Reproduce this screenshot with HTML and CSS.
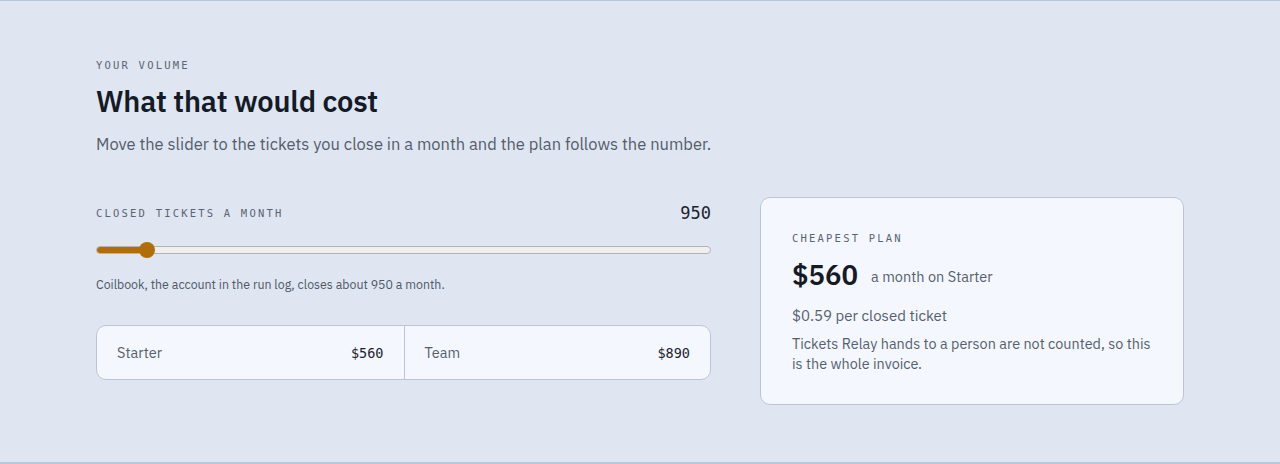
FILE: index.html
```html
<!DOCTYPE html>
<html lang="en">
<head>
<meta charset="utf-8">
<title>What that would cost</title>
<link rel="stylesheet" href="styles.css">
</head>
<body>
<section class="volume">
  <div class="intro">
    <p class="eyebrow">YOUR VOLUME</p>
    <h2 class="title">What that would cost</h2>
    <p class="lede">Move the slider to the tickets you close in a month and the plan follows the number.</p>
  </div>
  <div class="grid">
    <div class="calc">
      <div class="calc-head">
        <span class="eyebrow">CLOSED TICKETS A MONTH</span>
        <span class="count">950</span>
      </div>
      <div class="slider">
        <div class="track"><div class="fill" style="width: 51px"></div></div>
        <div class="thumb" style="left: 43px"></div>
      </div>
      <p class="note">Coilbook, the account in the run log, closes about 950 a month.</p>
      <div class="tiers">
        <div class="tier"><span class="tier-name">Starter</span><span class="tier-price">$560</span></div>
        <div class="tier"><span class="tier-name">Team</span><span class="tier-price">$890</span></div>
      </div>
    </div>
    <aside class="card">
      <p class="eyebrow">CHEAPEST PLAN</p>
      <div class="price-line"><span class="price">$560</span><span class="price-sub">a month on Starter</span></div>
      <p class="per">$0.59 per closed ticket</p>
      <p class="fine">Tickets Relay hands to a person are not counted, so this is the whole invoice.</p>
    </aside>
  </div>
</section>
</body>
</html>
```
FILE: styles.css
```css
* { box-sizing: border-box; }
html, body { margin: 0; padding: 0; }
body {
  background: #dfe6f1;
  font-family: "IBM Plex Sans", Inter, "Noto Sans", sans-serif;
  color: #4b5563;
}
.volume {
  height: 464px;
  border-top: 1px solid #b9c6d8;
  border-bottom: 2px solid #b9c6d8;
  padding: 56px 96px 0;
}
p { margin: 0; }
.eyebrow {
  font-family: "DejaVu Sans Mono", "Liberation Mono", monospace;
  font-size: 10.5px;
  letter-spacing: 2.2px;
  color: #5b6473;
  line-height: 16px;
}
.title {
  margin: 10px 0 0;
  font-size: 29px;
  font-weight: 600;
  color: #141b26;
  line-height: 36px;
  letter-spacing: -0.2px;
}
.lede {
  margin-top: 13px;
  font-size: 16.5px;
  line-height: 24px;
  color: #535d6c;
}
.grid {
  display: grid;
  grid-template-columns: 615px 424px;
  column-gap: 49px;
  margin-top: 41px;
}
.calc { padding-top: 6px; }
.calc-head {
  display: flex;
  justify-content: space-between;
  align-items: center;
}
.count {
  font-family: "DejaVu Sans Mono", "Liberation Mono", monospace;
  font-size: 17px;
  color: #1c2330;
}
.slider {
  position: relative;
  height: 16px;
  margin-top: 19px;
}
.track {
  position: absolute;
  left: 0; right: 0; top: 4px;
  height: 8px;
  border-radius: 4px;
  background: #efefef;
  border: 1px solid #b4b4b4;
  overflow: hidden;
}
.fill {
  height: 100%;
  background: #b06f04;
}
.thumb {
  position: absolute;
  top: 0;
  width: 16px; height: 16px;
  border-radius: 50%;
  background: #b06f04;
}
.note {
  margin-top: 18px;
  font-size: 12.35px;
  line-height: 16px;
  color: #4e5866;
}
.tiers {
  display: grid;
  grid-template-columns: 1fr 1fr;
  margin-top: 33px;
  height: 55px;
  background: #f4f7fd;
  border: 1px solid #bac6d8;
  border-radius: 10px;
}
.tier {
  display: flex;
  justify-content: space-between;
  align-items: center;
  padding: 0 20px;
}
.tier + .tier { border-left: 1px solid #bac6d8; }
.tier-name { font-size: 14.5px; color: #555f6e; }
.tier-price {
  font-family: "DejaVu Sans Mono", "Liberation Mono", monospace;
  font-size: 13.5px;
  color: #1c2330;
}
.card {
  height: 208px;
  background: #f4f7fd;
  border: 1px solid #bac6d8;
  border-radius: 10px;
  padding: 32px 31px;
}
.price-line {
  display: flex;
  align-items: center;
  gap: 13px;
  margin-top: 13px;
}
.price {
  font-size: 27.5px;
  font-weight: 600;
  color: #141b26;
  line-height: 32px;
}
.price-sub { font-size: 14.5px; line-height: 20px; color: #555f6e; padding-top: 3px; }
.per {
  margin-top: 15px;
  font-size: 15px;
  line-height: 20px;
  color: #555f6e;
}
.fine {
  margin-top: 8px;
  font-size: 14.4px;
  line-height: 20px;
  color: #555f6e;
}
```
